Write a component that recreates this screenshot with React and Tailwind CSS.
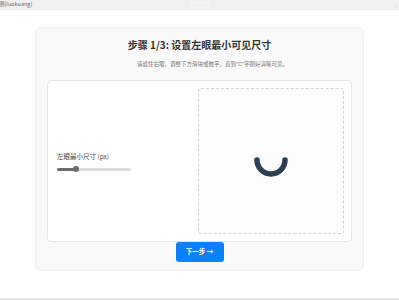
import React from "react";

const cjk = "font-['Noto_Sans_CJK_SC','Noto_Sans',sans-serif]";

function TopBar() {
  return (
    <div className="h-[10px] bg-[#f0f0f0] flex items-center justify-between pr-[2px] relative overflow-hidden">
      <span className="text-[5.5px] leading-none text-[#666] whitespace-nowrap -ml-[1px]">测(luokuang)</span>
      {/* faint centered caption */}
      <div className="absolute left-1/2 -translate-x-1/2 top-[1px] flex flex-col items-center leading-none">
        <span className="text-[3.5px] text-[#fbfbfb]">视力测试工具</span>
        <span className="text-[3px] text-[#fbfbfb] mt-[1px]">luokuang.local</span>
      </div>
      <span className="text-[5px] leading-none text-[#888]">-</span>
    </div>
  );
}

function Slider({ value }) {
  return (
    <div className="relative w-[74px] h-[3px] rounded-full bg-[#dcdcdc]">
      <div className="h-full rounded-full bg-[#6b6b6b]" style={{ width: value }} />
      <div
        className="absolute top-1/2 -translate-y-1/2 w-[6px] h-[6px] rounded-full bg-[#6b6b6b]"
        style={{ left: value - 3 }}
      />
    </div>
  );
}

export default function App() {
  return (
    <div className={`w-[399px] h-[300px] bg-white flex flex-col ${cjk}`}>
      <TopBar />

      <main className="h-[288px]">
        <div className="w-[329px] mx-auto mt-[17px] bg-[#f9f9f9] border border-[#f1f1f1] rounded-md px-[12px] pt-[10px] pb-[8px] flex flex-col items-center">
          <h1 className="text-[10px] leading-[14px] font-bold text-[#333]">步骤 1/3: 设置左眼最小可见尺寸</h1>
          <p className="mt-[8px] ml-[26px] text-[5.5px] leading-[8px] text-[#777]">
            请遮住右眼，调整下方滑块或数字，直到<span className="font-['Liberation_Sans',sans-serif]">"C"</span>字刚好清晰可见。
          </p>

          <div className="mt-[12px] w-[305px] h-[162px] bg-white border border-[#e6e6e6] rounded-[4px] flex items-center pl-[9px] pr-[7px]">
            <div className="flex-1 flex flex-col">
              <span className="text-[6.5px] leading-[9px] text-[#444]">左眼最小尺寸 (px)</span>
              <div className="mt-[7px]">
                <Slider value={19} />
              </div>
            </div>

            <div className="w-[146px] h-[146px] bg-[#fcfcfc] border border-dashed border-[#d4d4d4] rounded-[3px] flex items-center justify-center">
              <svg width="40" height="40" viewBox="0 0 40 40">
                <path
                  d="M6 19 A14 14 0 0 0 34 19"
                  fill="none"
                  stroke="#2c3e50"
                  strokeWidth="5.5"
                  strokeLinecap="round"
                />
              </svg>
            </div>
          </div>

          <button className="w-[48px] h-[20px] bg-[#0b80fb] rounded-[3px] text-white text-[6.5px] font-bold flex items-center justify-center">
            下一步 →
          </button>
        </div>
      </main>

      <div className="h-[2px] bg-[#e6e6e6]" />
    </div>
  );
}
